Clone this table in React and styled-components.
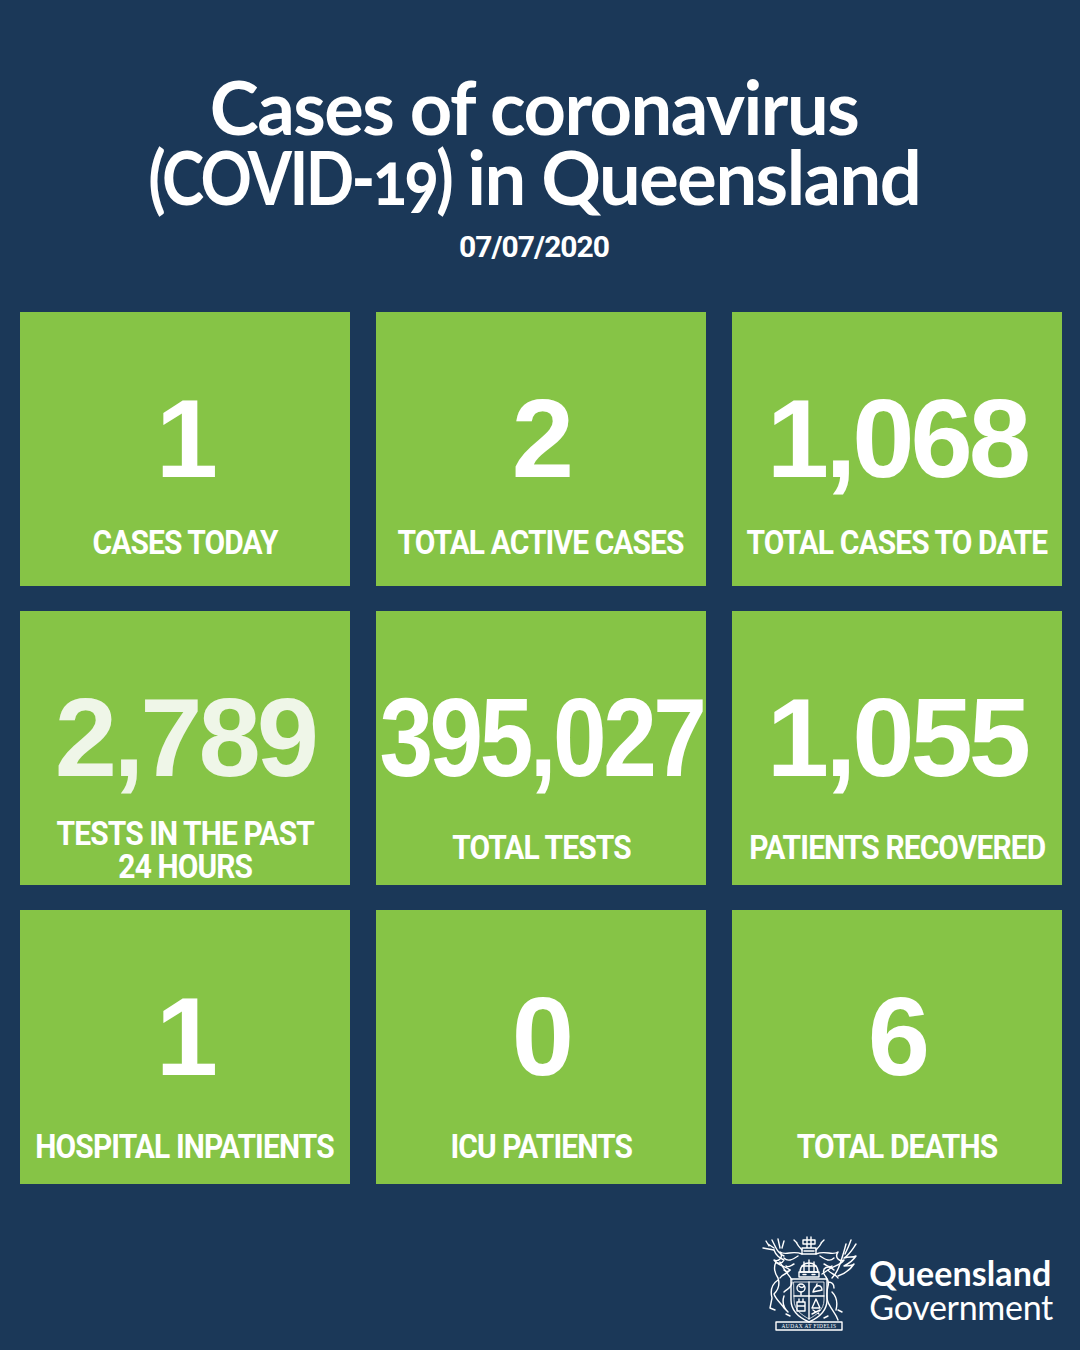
import React from 'react';
import styled, { createGlobalStyle } from 'styled-components';

const stats = [
  { value: '1', label: 'CASES TODAY', lift: true },
  { value: '2', label: 'TOTAL ACTIVE CASES', lift: true },
  { value: '1,068', label: 'TOTAL CASES TO DATE', lift: true },
  { value: '2,789', label: ['TESTS IN THE PAST', '24 HOURS'], soft: true },
  { value: '395,027', label: 'TOTAL TESTS', squeeze: true },
  { value: '1,055', label: 'PATIENTS RECOVERED' },
  { value: '1', label: 'HOSPITAL INPATIENTS' },
  { value: '0', label: 'ICU PATIENTS' },
  { value: '6', label: 'TOTAL DEATHS' },
];

const Crest = () => (
  <svg width='102' height='96' viewBox='0 0 102 96' fill='none' stroke='#fff' strokeWidth='1.4' strokeLinejoin='round' strokeLinecap='round'>
    {/* crest on top */}
    <path d='M45 4 h12 v4 h-12 z M49 1 v11 M53 1 v11 M44 12 h14 v6 h-14 z' />
    <path d='M46 15 h10 M38 6 c2 4 4 6 6 8 M64 6 c-2 4 -4 6 -6 8 M36 4 l3 3 M66 4 l-3 3' />
    {/* mantling */}
    <path d='M44 18 C34 14 28 20 22 16 C26 22 20 26 16 24 C20 30 28 30 32 34 C30 38 24 38 22 42' />
    <path d='M58 18 C68 14 74 20 80 16 C76 22 82 26 86 24 C82 30 74 30 70 34 C72 38 78 38 80 42' />
    <path d='M40 20 C34 24 30 26 26 22 M62 20 C68 24 72 26 76 22 M36 28 c-4 2 -6 4 -8 2 M66 28 c4 2 6 4 8 2' />
    {/* helmet */}
    <path d='M42 36 C42 24 60 24 60 36 Z' />
    <path d='M44 30 h14 M46 26 v10 M51 24 v12 M56 26 v10' />
    <rect x='41' y='36' width='20' height='5' />
    <path d='M45 38.5 h3 M54 38.5 h3' />
    {/* shield */}
    <path d='M33 43 H69 V64 C69 76 60 82 51 86 C42 82 33 76 33 64 Z' />
    <path d='M36 46 H66 V64 C66 74 58 79 51 83 C44 79 36 74 36 64 Z' strokeWidth='0.8' />
    <path d='M51 46 V83 M36 60 H66' />
    <circle cx='43' cy='52' r='4' />
    <path d='M41 50 c2 2 4 2 5 0 M43 56 v3' />
    <path d='M55 56 c2 -8 9 -8 9 -2 c-3 1 -6 1 -9 2 z M58 51 l1 -3' />
    <path d='M39 66 h8 v9 h-8 z M41 66 v-3 M45 66 v-3 M39 70 h8' />
    <path d='M58 63 l-4 9 h8 z M54 78 l8 -4 M55 74 l6 4' />
    {/* stag */}
    <path d='M14 4 l4 8 M10 8 l6 4 M5 12 l11 2 M18 12 c2 4 4 6 8 8 M20 3 l2 9 M26 5 l-2 7 M8 5 l3 5' />
    <path d='M16 14 c2 6 6 8 10 10 c-2 4 -6 4 -8 2 c-2 4 -2 10 2 16 c2 6 0 12 -4 16 c2 6 8 10 10 14 l4 4 M22 26 c4 8 8 12 12 18 M20 44 c-6 4 -8 10 -6 18 l-2 10 M26 60 c-2 6 0 12 4 16 M12 72 l5 2 M28 78 l4 2' />
    <path d='M26 56 c4 -4 8 -4 8 -10 M26 34 c2 2 4 2 6 0' />
    {/* brolga */}
    <path d='M98 8 c-4 6 -6 10 -12 14 c6 -2 8 0 12 -2 c-4 6 -8 8 -12 10 c4 0 8 0 10 -2 c-4 6 -10 10 -16 12' />
    <path d='M88 8 c-2 8 -4 14 -6 20 c-2 6 -4 10 -8 14 M93 4 c-2 6 -4 10 -6 14' />
    <path d='M76 34 c-6 -6 -12 -2 -10 4 c2 4 6 6 4 12 c-2 8 -2 14 2 20 c2 4 6 8 8 14 M74 56 c4 4 6 10 4 18 M70 46 c4 0 6 2 6 6 M80 74 l4 2 M70 80 l-4 2' />
    <path d='M64 38 l6 -4' />
    {/* motto */}
    <rect x='18' y='86' width='66' height='8' />
    <text x='51' y='92.4' fill='#fff' stroke='none' fontSize='5.4' textAnchor='middle' fontFamily='Liberation Serif, serif' letterSpacing='0.4'>AUDAX AT FIDELIS</text>
  </svg>
);

const App = () => (
  <Page>
    <GlobalStyle />
    <Header>
      <Title>
        Cases of coronavirus
        <br />
        <Tight>(COVID-19)</Tight> in Queensland
      </Title>
      <DateLine>07/07/2020</DateLine>
    </Header>
    <Grid>
      {stats.map((s, i) => (
        <Tile key={i}>
          <Number $soft={s.soft} $squeeze={s.squeeze}>
            {s.value}
          </Number>
          <Label $lift={s.lift} $multi={Array.isArray(s.label)}>
            <LabelText>
              {Array.isArray(s.label)
                ? s.label.map((l) => <span key={l}>{l}</span>)
                : s.label}
            </LabelText>
          </Label>
        </Tile>
      ))}
    </Grid>
    <Footer>
      <Crest />
      <Brand>
        <BrandBold>Queensland</BrandBold>
        <BrandLight>Government</BrandLight>
      </Brand>
    </Footer>
  </Page>
);

export default App;

const GlobalStyle = createGlobalStyle`
  html, body {
    margin: 0;
    padding: 0;
    background: #1b3858;
  }
`;

const Page = styled.div`
  width: 1080px;
  height: 1350px;
  background: #1b3858;
  overflow: hidden;
  color: #fff;
`;

const Header = styled.header`
  padding: 72px 12px 0 0;
  text-align: center;
`;

const Title = styled.h1`
  margin: 0;
  font-family: 'Lato', 'Open Sans', sans-serif;
  font-weight: 700;
  font-size: 74px;
  line-height: 70px;
  letter-spacing: -1.5px;
`;

const Tight = styled.span`
  display: inline-block;
  letter-spacing: -3px;
  font-variant-numeric: oldstyle-nums;
  transform: scaleX(0.86);
  transform-origin: right center;
  margin-left: -49px;
`;

const DateLine = styled.div`
  margin-top: 20px;
  font-family: 'Roboto', sans-serif;
  font-weight: 700;
  font-size: 30px;
  line-height: 30px;
  letter-spacing: -1px;
`;

const Grid = styled.main`
  display: grid;
  grid-template-columns: repeat(3, 330px);
  grid-auto-rows: 274px;
  column-gap: 26px;
  row-gap: 25px;
  margin-top: 50px;
  padding-left: 20px;
`;

const Tile = styled.section`
  background: #86c446;
  display: flex;
  flex-direction: column;
  align-items: center;
  padding-top: 71px;
  box-sizing: border-box;
  overflow: hidden;
`;

const Number = styled.div`
  font-family: 'Liberation Sans', Arial, sans-serif;
  font-weight: 700;
  font-size: 112px;
  line-height: 112px;
  height: 112px;
  letter-spacing: -4px;
  white-space: nowrap;
  color: ${(p) => (p.$soft ? '#eff6e8' : '#fff')};
  transform: ${(p) => (p.$squeeze ? 'scaleX(0.86)' : 'none')};
`;

const Label = styled.div`
  flex: 1;
  align-self: stretch;
  display: flex;
  align-items: center;
  justify-content: center;
  padding-top: ${(p) => (p.$lift ? '8px' : p.$multi ? '21px' : '15px')};
  padding-bottom: ${(p) => (p.$lift ? '5px' : '0')};
`;

const LabelText = styled.div`
  display: flex;
  flex-direction: column;
  align-items: center;
  font-family: 'Roboto', sans-serif;
  font-weight: 700;
  font-size: 34px;
  line-height: 33px;
  letter-spacing: -1px;
  white-space: nowrap;
  transform: scaleX(0.88);
`;

const Footer = styled.footer`
  display: flex;
  justify-content: flex-end;
  align-items: flex-start;
  gap: 9px;
  margin-top: 52px;
  padding-right: 27px;
`;

const Brand = styled.div`
  display: flex;
  flex-direction: column;
  align-items: flex-start;
  margin-top: 20px;
  font-family: 'Lato', 'Open Sans', sans-serif;
  font-size: 34px;
  line-height: 34px;
`;

const BrandBold = styled.span`
  font-weight: 700;
  letter-spacing: 0.1px;
`;

const BrandLight = styled.span`
  font-weight: 400;
  letter-spacing: -0.3px;
`;
